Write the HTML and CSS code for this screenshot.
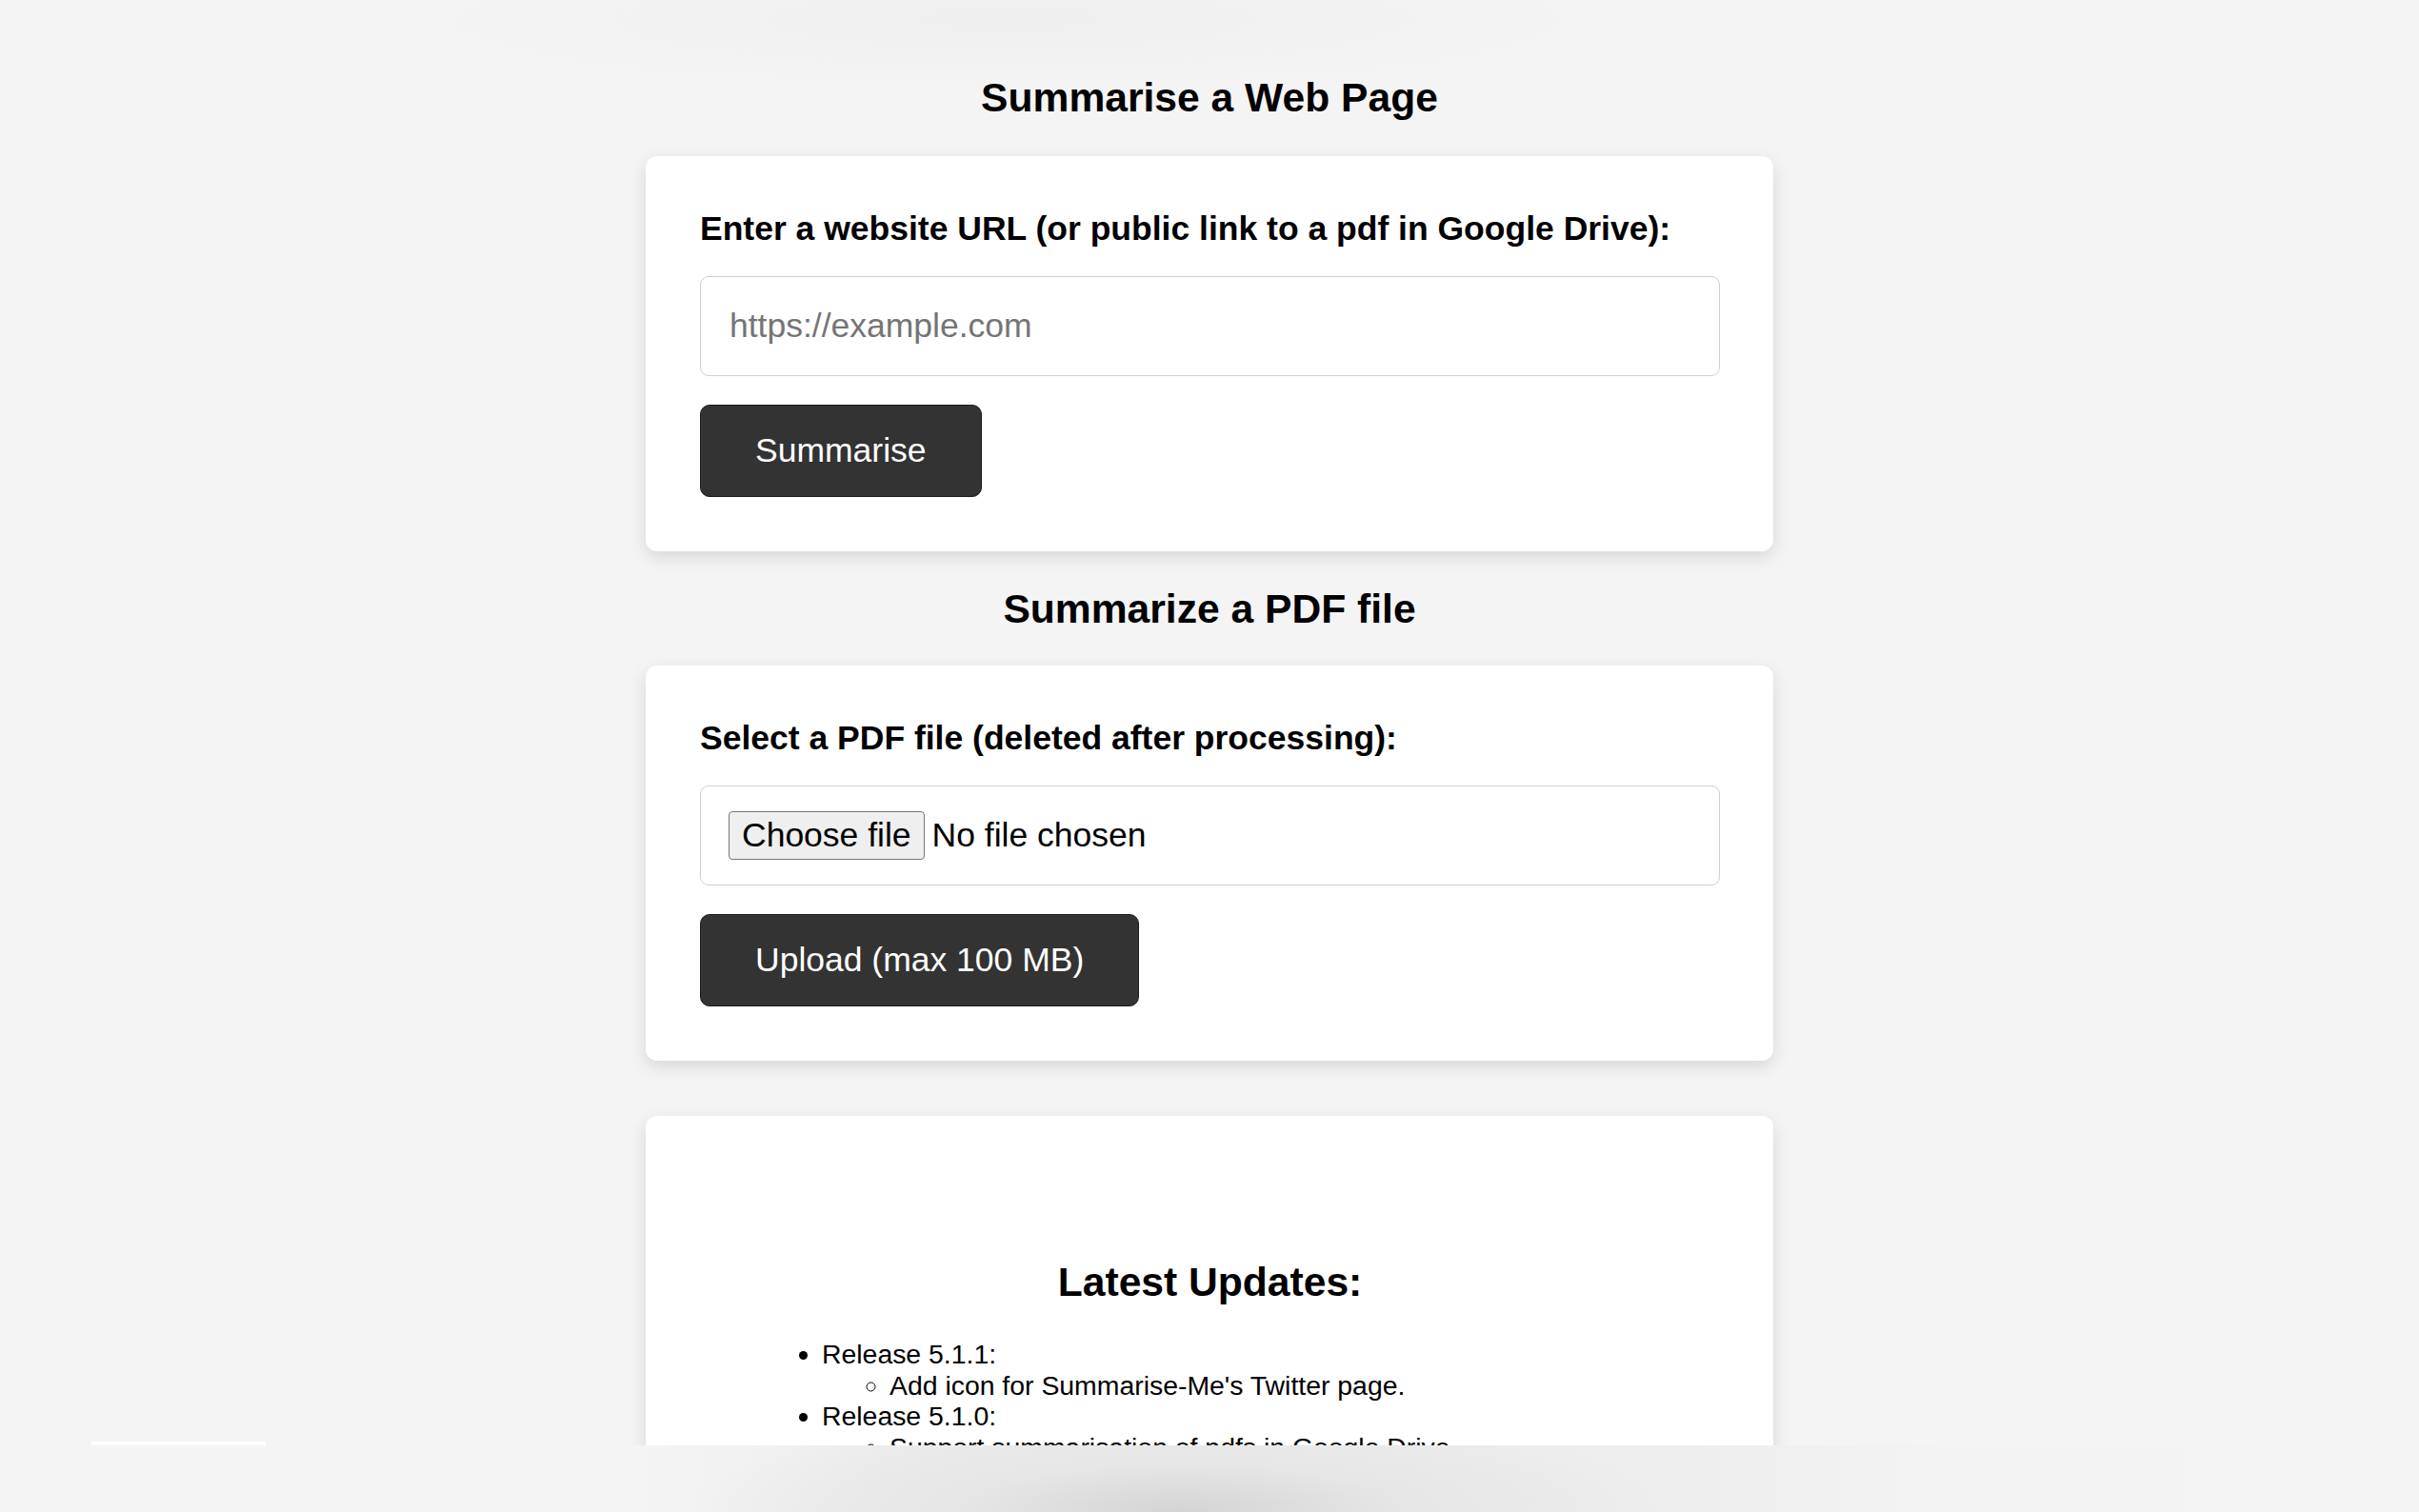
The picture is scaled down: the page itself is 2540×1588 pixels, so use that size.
FILE: index.html
```html
<!DOCTYPE html>
<html lang="en">
<head>
    <meta charset="UTF-8">
    <meta name="viewport" content="width=device-width, initial-scale=1.0">
    <title>Summarise Me</title>
    <link rel="stylesheet" href="styles.css">
</head>
<body>
    <div id="page">
        <h1 class="section-title">Summarise a Web Page</h1>
        <form class="card">
            <label for="url-input" class="field-label">Enter a website URL (or public link to a pdf in Google Drive):</label>
            <input type="text" id="url-input" class="text-input" placeholder="https://example.com">
            <button type="button" class="dark-button">Summarise</button>
        </form>

        <h2 class="section-title">Summarize a PDF file</h2>
        <form class="card">
            <label class="field-label">Select a PDF file (deleted after processing):</label>
            <label class="file-box">
                <input type="file" accept="application/pdf" class="hidden-file">
                <span class="file-button">Choose file</span>
                <span class="file-name">No file chosen</span>
            </label>
            <button type="button" class="dark-button">Upload (max 100 MB)</button>
        </form>

        <div class="card updates">
            <h2 class="updates-title">Latest Updates:</h2>
            <ul class="updates-list">
                <li>Release 5.1.1:
                    <ul>
                        <li>Add icon for Summarise-Me's Twitter page.</li>
                    </ul>
                </li>
                <li>Release 5.1.0:
                    <ul>
                        <li>Support summarisation of pdfs in Google Drive.</li>
                    </ul>
                </li>
                <li>Release 5.0.0:
                    <ul>
                        <li>Upload and summarise PDF files.</li>
                    </ul>
                </li>
            </ul>
        </div>
    </div>

    <div class="bottom-fade"></div>
</body>
</html>
```

FILE: styles.css
```css
/* Global styles */
body {
    font-family: 'Liberation Sans', Arial, Helvetica, sans-serif;
    margin: 0;
    padding: 0;
    color: #000;
    background-color: #f4f4f4;
    background-image: radial-gradient(ellipse 640px 75px at 1060px 20px, #efefef, rgba(244, 244, 244, 0) 100%);
    background-repeat: no-repeat;
    min-height: 100vh;
}

#page {
    width: 1184px;
    margin: 0 auto;
    padding-top: 78px;
    display: flex;
    flex-direction: column;
}

.section-title {
    font-size: 42.6px;
    font-weight: bold;
    text-align: center;
    line-height: 49px;
    margin: 0 0 37px;
}

h2.section-title {
    margin-top: 36px;
    margin-bottom: 35px;
}

.card {
    background-color: #fff;
    border-radius: 12px;
    padding: 56px 56px 57px 57px;
    box-shadow: 0 6px 18px rgba(0, 0, 0, 0.12);
    display: flex;
    flex-direction: column;
    align-items: flex-start;
    margin: 0;
}

.field-label {
    display: block;
    font-size: 35.5px;
    font-weight: bold;
    line-height: 41px;
    margin-bottom: 29px;
}

.text-input {
    box-sizing: border-box;
    width: 100%;
    height: 105px;
    padding: 0 30px;
    border: 1.5px solid #cfcfcf;
    border-radius: 9px;
    font-family: inherit;
    font-size: 35.5px;
    color: #000;
    outline: none;
}

.text-input::placeholder {
    color: #757575;
}

.dark-button {
    margin-top: 30px;
    height: 97px;
    padding: 0 57px;
    background-color: #333;
    color: #fff;
    border: 1.5px solid #1c1c1c;
    border-radius: 10px;
    font-family: inherit;
    font-size: 35.5px;
    cursor: pointer;
}

/* File picker */
.file-box {
    box-sizing: border-box;
    width: 100%;
    height: 105px;
    padding: 0 29px;
    border: 1.5px solid #cfcfcf;
    border-radius: 9px;
    display: flex;
    align-items: center;
    gap: 8px;
    font-size: 35.5px;
    cursor: pointer;
}

.hidden-file {
    display: none;
}

.file-button {
    box-sizing: border-box;
    height: 51px;
    padding: 0 13px;
    display: flex;
    align-items: center;
    background-color: #efefef;
    border: 1.5px solid #767676;
    border-radius: 4px;
    color: #000;
}

.file-name {
    color: #000;
}

/* Updates */
.updates {
    margin-top: 58px;
    align-items: stretch;
    min-height: 600px;
}

.updates-title {
    font-size: 42.6px;
    line-height: 49px;
    text-align: center;
    margin: 94px 0 35px;
}

.updates-list {
    font-size: 28.4px;
    line-height: 32.6px;
    margin: 0 0 0 57px;
    padding-left: 71px;
}

.updates-list ul {
    margin: 0;
    padding-left: 71px;
    list-style-type: circle;
}

/* Fade at the bottom of the viewport */
.bottom-fade {
    position: fixed;
    left: 0;
    right: 0;
    bottom: 0;
    height: 70px;
    background-color: #f3f3f3;
    background-image:
        radial-gradient(ellipse 520px 110px at 1240px 100%, #d4d4d4, #e6e6e6 45%, rgba(240, 240, 240, 0) 100%),
        linear-gradient(to right, #f4f4f4 0%, #f4f4f4 26%, #ececec 40%, #eeeeee 70%, #f3f3f3 80%, #f4f4f4 100%);
}

.bottom-fade::before {
    content: "";
    position: absolute;
    top: -4px;
    left: 96px;
    width: 183px;
    height: 4px;
    background-color: #fff;
}
```
